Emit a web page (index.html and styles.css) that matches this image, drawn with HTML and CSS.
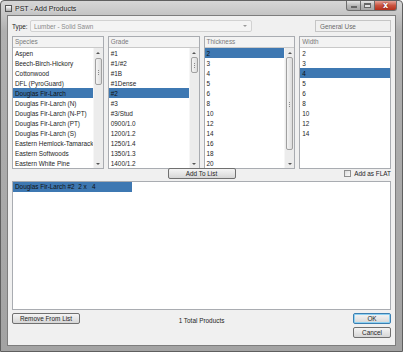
FILE: index.html
```html
<!DOCTYPE html>
<html lang="en">
<head>
  <meta charset="UTF-8" />
  <title>PST - Add Products</title>
  <link rel="stylesheet" href="styles.css">
</head>
<body>

<div class="window">
  <div class="titlebar">
    <div class="title"><span class="app-icon"></span>PST - Add Products</div>
    <div class="caption">
      <span class="cap min"><i></i></span>
      <span class="cap max"><i></i></span>
      <span class="cap close">x</span>
    </div>
  </div>

  <div class="client">
    <div class="type-row">
      <span class="type-label">Type:</span>
      <div class="combo">Lumber - Solid Sawn<span class="combo-arrow"></span></div>
      <div class="usage">General Use</div>
    </div>

    <div class="pickers">
      <div class="picker">
        <div class="picker-head">Species</div>
        <div class="picker-body">
          <ul class="items">
            <li>Aspen</li>
            <li>Beech-Birch-Hickory</li>
            <li>Cottonwood</li>
            <li>DFL (PyroGuard)</li>
            <li class="sel">Douglas Fir-Larch</li>
            <li>Douglas Fir-Larch (N)</li>
            <li>Douglas Fir-Larch (N-PT)</li>
            <li>Douglas Fir-Larch (PT)</li>
            <li>Douglas Fir-Larch (S)</li>
            <li>Eastern Hemlock-Tamarack</li>
            <li>Eastern Softwoods</li>
            <li>Eastern White Pine</li>
          </ul>
          <div class="scrollbar">
            <span class="sb-btn up"></span>
            <div class="sb-track"><span class="thumb thumb-species"></span></div>
            <span class="sb-btn down"></span>
          </div>
        </div>
      </div>

      <div class="picker">
        <div class="picker-head">Grade</div>
        <div class="picker-body">
          <ul class="items">
            <li>#1</li>
            <li>#1/#2</li>
            <li>#1B</li>
            <li>#1Dense</li>
            <li class="sel">#2</li>
            <li>#3</li>
            <li>#3/Stud</li>
            <li>0900/1.0</li>
            <li>1200/1.2</li>
            <li>1250/1.4</li>
            <li>1350/1.3</li>
            <li>1400/1.2</li>
          </ul>
          <div class="scrollbar">
            <span class="sb-btn up"></span>
            <div class="sb-track"><span class="thumb thumb-grade"></span></div>
            <span class="sb-btn down"></span>
          </div>
        </div>
      </div>

      <div class="picker">
        <div class="picker-head">Thickness</div>
        <div class="picker-body">
          <ul class="items">
            <li class="sel">2</li>
            <li>3</li>
            <li>4</li>
            <li>5</li>
            <li>6</li>
            <li>8</li>
            <li>10</li>
            <li>12</li>
            <li>14</li>
            <li>16</li>
            <li>18</li>
            <li>20</li>
          </ul>
          <div class="scrollbar">
            <span class="sb-btn up"></span>
            <div class="sb-track"><span class="thumb thumb-thickness"></span></div>
            <span class="sb-btn down"></span>
          </div>
        </div>
      </div>

      <div class="picker">
        <div class="picker-head">Width</div>
        <div class="picker-body">
          <ul class="items">
            <li>2</li>
            <li>3</li>
            <li class="sel">4</li>
            <li>5</li>
            <li>6</li>
            <li>8</li>
            <li>10</li>
            <li>12</li>
            <li>14</li>
          </ul>
        </div>
      </div>
    </div>

    <div class="add-row">
      <span></span>
      <button class="btn add-btn">Add To List</button>
      <label class="flat"><span class="check"></span>Add as FLAT</label>
    </div>

    <div class="product-list">
      <div class="product sel">Douglas Fir-Larch #2&nbsp;&nbsp;2 x&nbsp;&nbsp;&nbsp;4</div>
    </div>

    <div class="bottom-row">
      <div><button class="btn remove-btn">Remove From List</button></div>
      <div class="total">1 Total Products</div>
      <div class="dialog-btns">
        <button class="btn ok-btn">OK</button>
        <button class="btn">Cancel</button>
      </div>
    </div>
  </div>
</div>

</body>
</html>
```

FILE: styles.css
```css
* {
  box-sizing: border-box;
}
body {
  margin: 0;
  font-family: 'Liberation Sans', Arial, sans-serif;
  font-size: 6.4px;
  color: #1e1e1e;
  background: #fff;
}
.window {
  width: 403px;
  height: 352px;
  display: flex;
  flex-direction: column;
  border: 1px solid #5f5f5f;
  border-radius: 4px 4px 0 0;
  padding: 0 6px 5px 6px;
  background: linear-gradient(#d6d6d6, #b0b0b0 30px, #a3a3a3);
}

/* title bar */
.titlebar {
  height: 14px;
  display: flex;
  justify-content: space-between;
  align-items: flex-start;
}
.title {
  display: flex;
  align-items: center;
  gap: 3px;
  height: 14px;
  margin-left: -2px;
  font-size: 7px;
  color: #222;
  text-shadow: 0 0 3px #fff;
}
.app-icon {
  width: 7px;
  height: 7px;
  border: 1px solid #555;
  background: linear-gradient(#fff, #aaa);
}
.caption {
  display: flex;
  margin-right: -1px;
}
.cap {
  height: 10px;
  border: 1px solid #6d6d6d;
  border-top: none;
  display: flex;
  align-items: center;
  justify-content: center;
  background: linear-gradient(#e6e6e6, #b9b9b9 50%, #a6a6a6);
}
.cap.min {
  width: 15px;
  border-bottom-left-radius: 3px;
}
.cap.min i {
  width: 6px;
  height: 2px;
  margin-top: 3px;
  background: #fff;
  border: 1px solid #666;
}
.cap.max {
  width: 14px;
  border-left: none;
}
.cap.max i {
  width: 7px;
  height: 5px;
  border: 1px solid #666;
  border-top-width: 2px;
  background: #e0e0e0;
}
.cap.close {
  width: 22px;
  border-left: none;
  border-bottom-right-radius: 3px;
  color: #fff;
  font-family: 'DejaVu Sans', sans-serif;
  font-weight: bold;
  font-size: 8px;
  background: linear-gradient(#e6a59a, #c9533f 50%, #b5301c);
  text-shadow: 0 0 2px #600;
}

/* client area */
.client {
  flex: 1;
  display: flex;
  flex-direction: column;
  background: #f0f0f0;
  border: 1px solid #7d7d7d;
  padding: 4px 4px 0 4px;
}
.type-row {
  height: 12px;
  display: flex;
  align-items: center;
}
.type-label {
  width: 18px;
}
.combo {
  width: 222px;
  height: 12px;
  display: flex;
  align-items: center;
  justify-content: space-between;
  padding: 0 4px 0 3px;
  color: #8b8b8b;
  background: #f4f4f4;
  border: 1px solid #d2d2d2;
  border-radius: 2px;
}
.combo-arrow {
  width: 0;
  height: 0;
  border-left: 2px solid transparent;
  border-right: 2px solid transparent;
  border-top: 2px solid #9a9a9a;
}
.usage {
  margin-left: auto;
  width: 76px;
  height: 12px;
  display: flex;
  align-items: center;
  padding-left: 4px;
  color: #6a6a6a;
  background: #f0f0f0;
  border: 1px solid #c5c5c5;
}

/* list pickers */
.pickers {
  margin-top: 4px;
  height: 129px;
  display: grid;
  grid-template-columns: repeat(4, 1fr);
  gap: 4px;
}
.picker {
  display: flex;
  flex-direction: column;
  border: 1px solid #a9acb1;
  background: #fff;
  min-width: 0;
}
.picker-head {
  height: 11px;
  flex: none;
  padding-left: 2px;
  line-height: 10px;
  color: #7a7a7a;
  background: #f3f3f3;
  border-bottom: 1px solid #c9c9c9;
}
.picker-body {
  flex: 1;
  display: flex;
  overflow: hidden;
}
.items {
  flex: 1;
  list-style: none;
  margin: 0;
  padding: 0;
  overflow: hidden;
}
.items li {
  height: 10px;
  line-height: 11px;
  padding-left: 2px;
  white-space: nowrap;
}
.sel {
  background: #3e78b2;
  color: #111;
}

/* scrollbars */
.scrollbar {
  width: 10px;
  flex: none;
  display: flex;
  flex-direction: column;
  background: #ececec;
  border-left: 1px solid #f6f6f6;
}
.sb-btn {
  height: 9px;
  display: flex;
  align-items: center;
  justify-content: center;
}
.sb-btn::before {
  content: "";
  border-left: 2px solid transparent;
  border-right: 2px solid transparent;
}
.sb-btn.up::before {
  border-bottom: 2px solid #555;
}
.sb-btn.down::before {
  border-top: 2px solid #555;
}
.sb-track {
  flex: 1;
  display: flex;
  flex-direction: column;
}
.thumb {
  display: block;
  margin: 0 1px;
  border: 1px solid #a0a0a0;
  border-radius: 2px;
  background: linear-gradient(to right, #f4f4f4, #dcdcdc);
  position: relative;
}
.thumb::after {
  content: "";
  position: absolute;
  left: 2px;
  right: 2px;
  top: 50%;
  height: 5px;
  margin-top: -2px;
  background: repeating-linear-gradient(#8a8a8a 0 1px, transparent 1px 2px);
}
.thumb-species {
  margin-top: 1px;
  height: 27px;
}
.thumb-grade {
  height: 16px;
}
.thumb-thickness {
  height: 93px;
}

/* add row */
.add-row {
  margin-top: 3px;
  height: 11px;
  display: grid;
  grid-template-columns: 1fr auto 1fr;
  align-items: center;
}
.btn {
  font-family: inherit;
  font-size: 6.4px;
  color: #1e1e1e;
  height: 11px;
  padding: 0;
  border: 1px solid #707070;
  border-radius: 2px;
  background: linear-gradient(#f4f4f4, #e6e6e6 50%, #d6d6d6);
  line-height: 9px;
}
.add-btn {
  width: 68px;
}
.flat {
  justify-self: end;
  display: flex;
  align-items: center;
  gap: 3px;
}
.check {
  width: 7px;
  height: 7px;
  border: 1px solid #8e8f8f;
  background: linear-gradient(135deg, #dcdcdc, #fafafa);
}

/* product list */
.product-list {
  margin-top: 2px;
  height: 129px;
  background: #fff;
  border: 1px solid #a9acb1;
}
.product {
  width: 119px;
  height: 10px;
  line-height: 10px;
  padding-left: 2px;
}

/* bottom */
.bottom-row {
  margin-top: 3px;
  display: grid;
  grid-template-columns: 1fr auto 1fr;
  align-items: start;
}
.remove-btn {
  width: 68px;
}
.total {
  line-height: 11px;
  padding-top: 2px;
}
.dialog-btns {
  justify-self: end;
  display: flex;
  flex-direction: column;
  gap: 3px;
}
.dialog-btns .btn {
  width: 38px;
}
.ok-btn {
  border-color: #3c7fb1;
  box-shadow: inset 0 0 0 1px #8ed1f2;
}
```
